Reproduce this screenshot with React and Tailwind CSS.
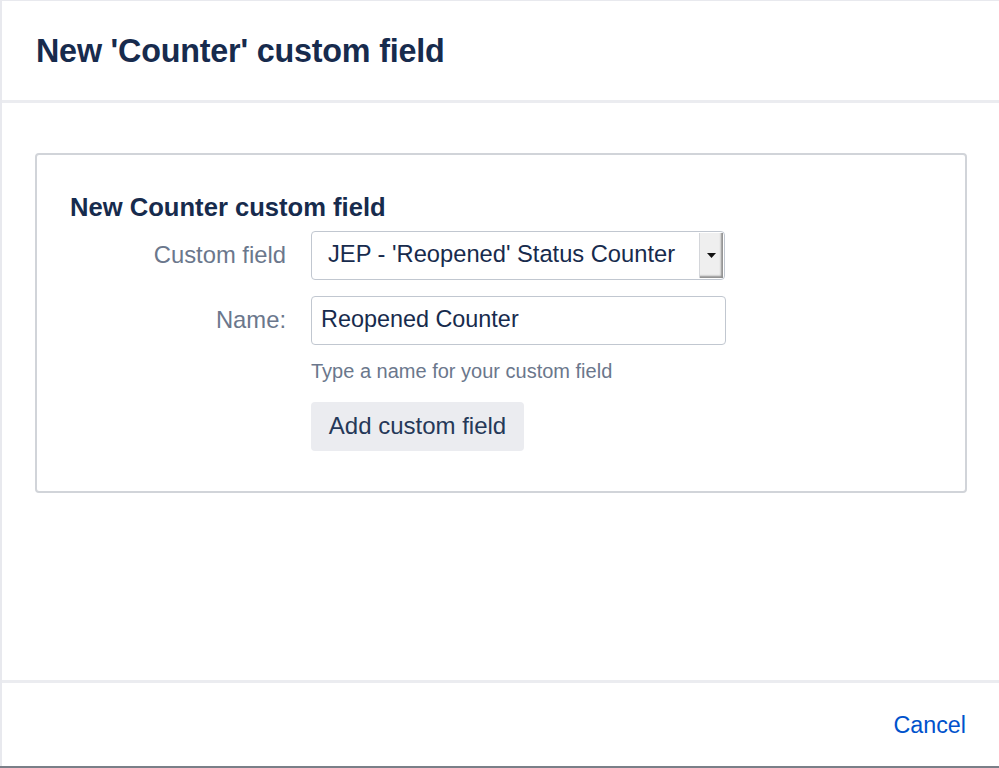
export default function App() {
  return (
    <div
      className="flex h-[768px] w-[999px] flex-col overflow-hidden bg-white text-[#172b4d]"
      style={{ fontFamily: '"Liberation Sans", Arial, sans-serif' }}
    >
      <div className="flex h-[766px] flex-col border-l-2 border-t border-[#e8e9ee]">
        <header className="flex h-[102px] shrink-0 items-center border-b-[3px] border-[#ebecf0] pl-[34px]">
          <h1 className="pt-[2px] text-[32.3px] font-bold leading-none tracking-[-0.2px] text-[#172b4d]">
            New 'Counter' custom field
          </h1>
        </header>

        <main className="flex-1 pl-[33px] pr-[32px] pt-[50px]">
          <div className="h-[340px] rounded-[4px] border-2 border-[#d1d4d9] px-[33px] pt-[40px]">
            <h2 className="text-[25.6px] font-bold leading-none text-[#172b4d]">New Counter custom field</h2>

            <div className="mt-[10px] flex flex-col">
              <div className="flex items-center">
                <label className="w-[216px] text-right text-[23.8px] leading-none text-[#6b778c]">Custom field</label>
                <div className="ml-[25px] flex h-[49px] w-[414px] items-stretch overflow-hidden rounded-[4px] border border-[#c1c7d0] bg-white">
                  <span className="flex flex-1 items-center pl-[16px] text-[23.7px] leading-none text-[#172b4d]">
                    JEP - 'Reopened' Status Counter
                  </span>
                  <span className="my-[1px] mr-[1px] flex w-[24px] items-center justify-center border-l border-[#d4d6da] bg-[#efefef] shadow-[inset_-2px_-2px_2px_rgba(0,0,0,0.4)]">
                    <svg width="9" height="5" viewBox="0 0 9 5">
                      <path d="M0 0h9L4.5 5z" fill="#111" />
                    </svg>
                  </span>
                </div>
              </div>

              <div className="mt-[16px] flex items-center">
                <label className="w-[216px] text-right text-[23.8px] leading-none text-[#6b778c]">Name:</label>
                <div className="ml-[25px] flex h-[49px] w-[415px] items-center rounded-[4px] border border-[#c1c7d0] bg-white pl-[9px] text-[23.4px] leading-none text-[#172b4d]">
                  Reopened Counter
                </div>
              </div>

              <div className="ml-[241px]">
                <p className="mt-[16px] text-[20px] leading-none text-[#6b778c]">Type a name for your custom field</p>
                <button
                  type="button"
                  className="mt-[21px] flex h-[49px] w-[213px] items-center justify-center rounded-[4px] bg-[#ebecf0] text-[24px] leading-none text-[#253858]"
                >
                  Add custom field
                </button>
              </div>
            </div>
          </div>
        </main>

        <footer className="flex h-[86px] shrink-0 items-center justify-end border-t-[3px] border-[#ebecf0] pr-[33px]">
          <button type="button" className="mt-[2px] text-[23.3px] leading-none text-[#0052cc]">
            Cancel
          </button>
        </footer>
      </div>
      <div className="h-[2px] bg-[#7a7f88]" />
    </div>
  );
}
